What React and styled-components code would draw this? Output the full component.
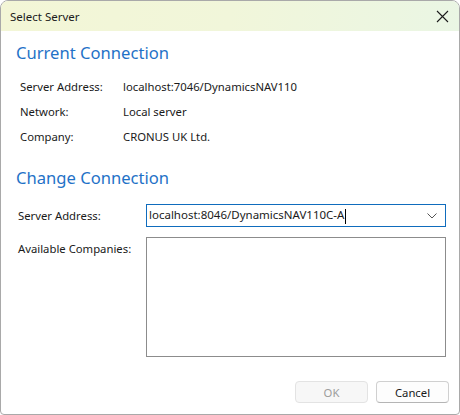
import styled, { createGlobalStyle } from "styled-components";

const GlobalStyle = createGlobalStyle`
  html, body {
    margin: 0;
    padding: 0;
    background: #ffffff;
  }
  body {
    font-family: "Noto Sans", "Open Sans", sans-serif;
    font-size: 11.3px;
    color: #1a1a1a;
  }
`;

const Window = styled.div`
  width: 460px;
  height: 415px;
  box-sizing: border-box;
  border: 1px solid #a9a9a9;
  border-radius: 8px 8px 4px 4px;
  background: #ffffff;
  display: flex;
  flex-direction: column;
  overflow: hidden;
`;

const TitleBar = styled.div`
  height: 30px;
  flex: none;
  display: flex;
  align-items: center;
  justify-content: space-between;
  padding: 0 9px 0 9px;
  background: linear-gradient(100deg, #f3f6d6 0%, #f1f6da 50%, #eaf6e4 100%);
`;

const Title = styled.span`
  font-size: 11.5px;
  color: #1c1c1c;
`;

const CloseBtn = styled.button`
  border: none;
  background: none;
  padding: 0;
  width: 16px;
  height: 16px;
  display: flex;
  align-items: center;
  justify-content: center;
`;

const Body = styled.div`
  flex: 1;
  display: flex;
  flex-direction: column;
  padding: 11px 10px 0 15px;
`;

const Heading = styled.h2`
  margin: 0;
  font-weight: 400;
  font-size: 16.6px;
  line-height: 22px;
  color: #1f72c7;
`;

const InfoGrid = styled.div`
  display: grid;
  grid-template-columns: 103px 1fr;
  grid-auto-rows: 25px;
  align-items: center;
  padding: 10px 0 0 4px;
  margin-bottom: 18px;
`;

const FormGrid = styled.div`
  display: grid;
  grid-template-columns: 128px 1fr;
  row-gap: 10px;
  padding: 15px 3px 0 2px;
`;

const Label = styled.span`
  font-size: 11.3px;
  color: #1a1a1a;
  padding-top: ${(p) => p.$top || 0}px;
`;

const Combo = styled.div`
  height: 23px;
  box-sizing: border-box;
  border: 1px solid #0f6cbd;
  display: flex;
  align-items: center;
  justify-content: space-between;
  padding: 0 8px 0 2px;
  font-size: 11.5px;
`;

const Caret = styled.span`
  display: inline-block;
  width: 1px;
  height: 15px;
  background: #000;
  vertical-align: middle;
  margin-left: 1px;
`;

const ListBox = styled.div`
  height: 120px;
  box-sizing: border-box;
  border: 1px solid #8c8c8c;
`;

const Footer = styled.div`
  margin-top: auto;
  display: flex;
  justify-content: flex-end;
  gap: 8px;
  padding: 0 0 11px 0;
`;

const Button = styled.button`
  width: 73px;
  height: 22px;
  box-sizing: border-box;
  border-radius: 4px;
  font-family: "Noto Sans", "Open Sans", sans-serif;
  font-size: 11.3px;
  border: 1px solid ${(p) => (p.disabled ? "#e3e3e3" : "#d0d0d0")};
  border-bottom-color: ${(p) => (p.disabled ? "#e3e3e3" : "#b5b5b5")};
  background: ${(p) => (p.disabled ? "#f7f7f7" : "#fdfdfd")};
  color: ${(p) => (p.disabled ? "#9d9d9d" : "#1a1a1a")};
  padding: 0;
`;

export default function App() {
  return (
    <>
      <GlobalStyle />
      <Window>
        <TitleBar>
          <Title>Select Server</Title>
          <CloseBtn aria-label="Close">
            <svg width="13" height="13" viewBox="0 0 13 13">
              <path d="M1 1L12 12M12 1L1 12" stroke="#1c1c1c" strokeWidth="1.1" />
            </svg>
          </CloseBtn>
        </TitleBar>
        <Body>
          <Heading>Current Connection</Heading>
          <InfoGrid>
            <Label>Server Address:</Label>
            <Label>localhost:7046/DynamicsNAV110</Label>
            <Label>Network:</Label>
            <Label>Local server</Label>
            <Label>Company:</Label>
            <Label>CRONUS UK Ltd.</Label>
          </InfoGrid>
          <Heading>Change Connection</Heading>
          <FormGrid>
            <Label $top={4}>Server Address:</Label>
            <Combo>
              <span>
                localhost:8046/DynamicsNAV110C-A
                <Caret />
              </span>
              <svg width="10" height="6" viewBox="0 0 10 6">
                <path d="M0.5 0.5L5 5L9.5 0.5" fill="none" stroke="#555" strokeWidth="1" />
              </svg>
            </Combo>
            <Label $top={4}>Available Companies:</Label>
            <ListBox />
          </FormGrid>
          <Footer>
            <Button disabled>OK</Button>
            <Button>Cancel</Button>
          </Footer>
        </Body>
      </Window>
    </>
  );
}
